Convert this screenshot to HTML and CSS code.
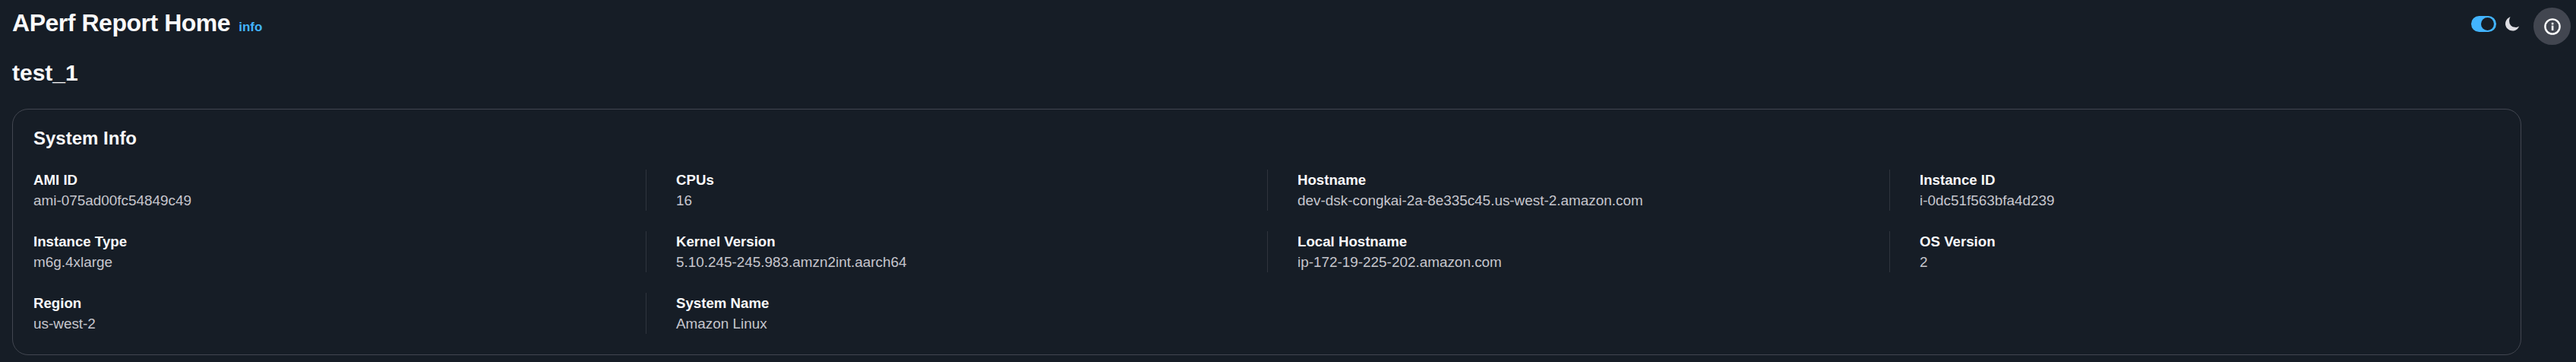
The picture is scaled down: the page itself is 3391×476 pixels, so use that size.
FILE: index.html
```html
<!DOCTYPE html>
<html lang="en">
<head>
  <meta charset="UTF-8" />
  <title>APerf Report Home</title>
  <link rel="stylesheet" href="styles.css">
</head>
<body>
  <div class="app">
    <main class="main">
      <header class="page-header">
        <div class="title-row">
          <h1>APerf Report Home</h1>
          <a class="info-link" href="#info">info</a>
        </div>
        <div class="theme-switch">
          <span class="toggle"><span class="knob"></span></span>
          <svg class="moon" viewBox="0 0 20 20" width="20" height="20">
            <path d="M7.6 1.2 A9.4 9.4 0 1 0 19.2 13.6 A7.6 7.6 0 0 1 13.6 14.8 A7.4 7.4 0 0 1 6.2 7 A7.6 7.6 0 0 1 7.6 1.2 Z" fill="#dedee3"/>
          </svg>
        </div>
      </header>

      <h2 class="run-name">test_1</h2>

      <section class="card">
        <h3>System Info</h3>
        <div class="info-grid">
          <div class="item"><div class="label">AMI ID</div><div class="value">ami-075ad00fc54849c49</div></div>
          <div class="item"><div class="label">CPUs</div><div class="value">16</div></div>
          <div class="item"><div class="label">Hostname</div><div class="value">dev-dsk-congkai-2a-8e335c45.us-west-2.amazon.com</div></div>
          <div class="item"><div class="label">Instance ID</div><div class="value">i-0dc51f563bfa4d239</div></div>
          <div class="item"><div class="label">Instance Type</div><div class="value">m6g.4xlarge</div></div>
          <div class="item"><div class="label">Kernel Version</div><div class="value">5.10.245-245.983.amzn2int.aarch64</div></div>
          <div class="item"><div class="label">Local Hostname</div><div class="value">ip-172-19-225-202.amazon.com</div></div>
          <div class="item"><div class="label">OS Version</div><div class="value">2</div></div>
          <div class="item"><div class="label">Region</div><div class="value">us-west-2</div></div>
          <div class="item"><div class="label">System Name</div><div class="value">Amazon Linux</div></div>
        </div>
      </section>
    </main>

    <aside class="rail">
      <button class="rail-btn" aria-label="Info">
        <svg viewBox="0 0 22 22" width="22" height="22">
          <circle cx="11" cy="11" r="9.6" fill="none" stroke="#fff" stroke-width="2.4"/>
          <rect x="9.8" y="9.6" width="2.6" height="6.4" fill="#fff"/>
          <rect x="9.8" y="5.8" width="2.6" height="2.6" fill="#fff"/>
        </svg>
      </button>
    </aside>
  </div>
</body>
</html>
```

FILE: styles.css
```css
* {
  margin: 0;
  padding: 0;
  box-sizing: border-box;
}

html, body {
  height: 100%;
  overflow: hidden;
  background: #161d26;
  font-family: "Liberation Sans", Arial, sans-serif;
  color: #f9f9fa;
}

.app {
  display: flex;
  height: 100%;
}

.main {
  flex: 1;
  padding: 0 0 0 16px;
  min-width: 0;
}

.page-header {
  display: flex;
  justify-content: space-between;
  height: 62px;
  padding-top: 12px;
}

.title-row {
  display: flex;
  align-items: baseline;
  gap: 11px;
}

h1 {
  font-size: 32px;
  line-height: 37px;
  font-weight: bold;
  letter-spacing: -0.47px;
}

.info-link {
  color: #42b4ff;
  font-size: 17px;
  font-weight: bold;
  text-decoration: none;
}

.theme-switch {
  display: flex;
  align-items: flex-start;
  gap: 11px;
  padding: 9px 2px 0 0;
}

.toggle {
  display: block;
  width: 33px;
  height: 21px;
  border-radius: 11px;
  background: #42b4ff;
  position: relative;
}

.knob {
  position: absolute;
  top: 2px;
  right: 3px;
  width: 17px;
  height: 17px;
  border-radius: 50%;
  background: #161d26;
}

.run-name {
  font-size: 30px;
  line-height: 36px;
  font-weight: bold;
  margin-top: 16px;
}

.card {
  margin-top: 29px;
  height: 324px;
  border: 1px solid #424650;
  border-radius: 21px;
  padding: 22px 27px 0;
}

.card h3 {
  font-size: 24px;
  line-height: 32px;
  font-weight: bold;
}

.info-grid {
  display: grid;
  grid-template-columns: 806px 818px 819px 1fr;
  row-gap: 27px;
  margin-top: 25px;
}

.item {
  height: 54px;
  padding-left: 39px;
  border-left: 1px solid #2f343d;
}

.item:nth-child(4n+1) {
  padding-left: 0;
  border-left: none;
}

.label {
  font-size: 18.67px;
  line-height: 27px;
  font-weight: bold;
}

.value {
  font-size: 18.9px;
  line-height: 27px;
  color: #c6c6cd;
}

.rail {
  width: 72px;
  padding: 10px 0 0 16px;
}

.rail-btn {
  display: flex;
  align-items: center;
  justify-content: center;
  width: 49px;
  height: 49px;
  border: none;
  border-radius: 50%;
  background: #424650;
}
```
